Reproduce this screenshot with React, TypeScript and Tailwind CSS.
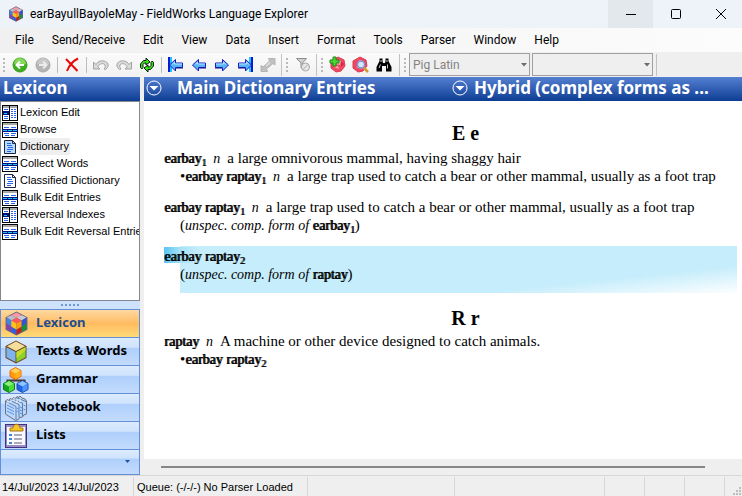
import type { ReactNode } from 'react';

const uiFont = 'font-[Roboto,sans-serif]';
const listFont = "font-['Liberation_Sans',Arial,sans-serif]";
const boldFont = "font-['Noto_Sans','Open_Sans',sans-serif]";
const bookFont = "font-['Liberation_Serif',serif]";

function Cubes({ size }: { size: number }) {
  return (
    <svg width={size} height={size} viewBox="0 0 24 24" aria-hidden="true">
      <path d="M12 .5 22.500 6v12L12 23.500 1.500 18V6z" fill="#6a6480" />
      <path d="M12 1.500 17 4l-5 2.500L7 4z" fill="#ff9aa0" />
      <path d="M7 4l5 2.500L7 9 2.500 6z" fill="#b9bccb" />
      <path d="M17 4l4.500 2L17 9l-5-2.500z" fill="#c8cad4" />
      <path d="M12 6.500 17 9l-5 3-5-3z" fill="#ff5a5a" />
      <path d="M2.500 6.500 7 9v6l-4.500-3z" fill="#3f86e8" />
      <path d="M7 9l5 3v6l-5-3z" fill="#ffc21a" />
      <path d="M12 12l5-3v6l-5 3z" fill="#ff9c10" />
      <path d="M17 9l4.500-2.500V12L17 15z" fill="#2e55d4" />
      <path d="M2.500 12 7 15v5l-4.500-2.500z" fill="#8c3fae" />
      <path d="M7 15l5 3v4.500L7 20z" fill="#2f62d9" />
      <path d="M12 18l5-3v5l-5 2.500z" fill="#c3201f" />
      <path d="M17 15l4.500-3v5.500L17 20z" fill="#159338" />
    </svg>
  );
}

function WordsIcon() {
  return (
    <svg width="24" height="26" viewBox="0 0 24 26" aria-hidden="true">
      <path d="M12 1.500 22.500 7v12L12 24.500 1.500 19V7z" fill="#6d4a28" />
      <path d="M12 2.500 21 7.200 12 12 3 7.200z" fill="#f7dd9a" />
      <path d="M2.500 8.200 11.500 13v10L2.500 18.300z" fill="#7db4ee" />
      <path d="M12.500 13l9-4.800v10.100l-9 4.900z" fill="#8bd32a" />
      <path d="M12.500 13l9-4.800v3l-9 8z" fill="#c6dc2b" />
    </svg>
  );
}

function GrammarIcon() {
  const hex = (x: number, y: number, top: string, left: string, right: string, edge: string) => (
    <g transform={`translate(${x} ${y})`}>
      <path d="M0-6 5.500-3v6L0 6-5.500 3v-6z" fill={left} stroke={edge} strokeLinejoin="round" />
      <path d="M0-5.500 5-2.800 0 0-5-2.800z" fill={top} />
      <path d="M0 0l5-2.800v5.600L0 5.500z" fill={right} />
    </g>
  );
  return (
    <svg width="26" height="26" viewBox="0 0 26 26" aria-hidden="true">
      <path d="M12.500 11v3M4.500 16v-2.500h17V16" fill="none" stroke="#4c3428" strokeWidth="2" />
      {hex(12.5, 6.5, '#ffd35a', '#ff9a10', '#ffb01c', '#f06a00')}
      {hex(6, 19.5, '#86f07a', '#14a51e', '#4fdc3a', '#0c7d18')}
      {hex(19.5, 19.5, '#90c4ff', '#1e62e0', '#4c96ff', '#1848b0')}
    </svg>
  );
}

function NotebookIcon() {
  return (
    <svg width="24" height="26" viewBox="0 0 24 26" aria-hidden="true">
      <path d="M1.500 6 3 4.500l2 1 1-2 2 1 1.500-2 2 1 1.500-2 2 1 1-1.500L18 3l3 1 1.500 2v13l-3 1-1 2-3 .5-1 2-3 1L1.500 19z" fill="#bcd8fb" stroke="#6c6f80" />
      <path d="M2 6.500l10 5V25M5 5l10 4.500v13M8.500 4l10 4v13M12 2.500l10 4" fill="none" stroke="#5f7ea9" />
      <path d="M3 10l7 3.500M3 13l7 3.500M3 16l7 3.500M16 12l2 1M16 15l2 1M16 18l2 1M13 13l1.500 1M13 16l1.500 1M19.500 10l2 1M19.500 14l2 1" stroke="#4f90ee" />
      <path d="M4 5.500v3M7 4.500v3M10 3v3M13 5v3M16 4v3" stroke="#f4f8ff" />
    </svg>
  );
}

function ListsIcon() {
  return (
    <svg width="24" height="26" viewBox="0 0 24 26" aria-hidden="true">
      <rect x="1.500" y="1.500" width="21" height="23" fill="#9a8cc8" stroke="#41307e" />
      <rect x="3" y="4" width="18" height="18" fill="#fbfbff" />
      <path d="M6 8V5h3c0-5 7-5 7 0h3v3z" fill="#f5c52c" stroke="#a3720c" />
      <path d="M5 11h3v2H5zM5 15h3v2H5zM5 19h3v2H5z" fill="#3d86dc" />
      <path d="M10 12h8M10 16h8M10 20h8" stroke="#8f92a8" strokeWidth="1.500" />
    </svg>
  );
}

function ColumnsIcon() {
  return (
    <svg width="16" height="16" viewBox="0 0 16 16" shapeRendering="crispEdges" aria-hidden="true">
      <path d="M0 0h16v16H0z" fill="#000" />
      <path d="M1 1h6v2H1zM8 1h7v2H8z" fill="#a9a9a9" />
      <path d="M1 3h6v12H1zM8 3h7v12H8z" fill="#fff" />
      <path d="M2 4h4v1H2zM2 11h4v1H2zM2 13h4v1H2zM9 4h2v1H9zM12 4h2v1h-2zM9 6h2v1H9zM12 6h2v1h-2zM9 8h2v1H9zM12 8h2v1h-2zM9 10h2v1H9zM12 10h2v1h-2zM9 12h2v1H9zM12 12h2v1h-2z" fill="#2a62f0" />
      <path d="M1 6h6v4H1z" fill="#00107c" />
      <path d="M2 8h3v1H2z" fill="#16c8f0" />
    </svg>
  );
}

function RowsIcon() {
  return (
    <svg width="16" height="16" viewBox="0 0 16 16" shapeRendering="crispEdges" aria-hidden="true">
      <path d="M0 0h16v16H0z" fill="#000" />
      <path d="M1 1h14v2H1z" fill="#a9a9a9" />
      <path d="M1 3h14v4H1zM1 10h14v5H1z" fill="#fff" />
      <path d="M2 5h5v1H2zM9 5h5v1H9zM2 11h5v1H2zM9 11h5v1H9zM3 13h4v1H3zM9 13h4v1H9z" fill="#2a62f0" />
      <path d="M0 7h16v3H0z" fill="#00107c" />
      <path d="M1 8h4v1H1zM6 8h4v1H6zM11 8h4v1h-4z" fill="#16c8f0" />
    </svg>
  );
}

function PageIcon({ shade }: { shade: string }) {
  return (
    <svg width="16" height="16" viewBox="0 0 16 16" aria-hidden="true">
      <path d="M2.500 1.500h8l3 3v10h-11z" fill={shade} stroke="#1c2440" />
      <path d="M10.500 1.500v3h3" fill="none" stroke="#1c2440" />
      <path d="M5 4.500h4M5 6.500h5M6 8.500h5M5 10.500h6M5 12.500h4" stroke="#2a62f0" />
    </svg>
  );
}

function Arrow({ left, bar }: { left?: boolean; bar?: boolean }) {
  return (
    <svg width="16" height="16" viewBox="0 0 16 16" aria-hidden="true">
      <g transform={left ? undefined : 'translate(16 0) scale(-1 1)'}>
        {bar && <path d="M0 0h2v15H0z" fill="#0a18d8" />}
        {bar && <path d="M2 0h2v15H2z" fill="#18c8f8" />}
        <path d="M1.500 8l6-5.500V6h7v4.500h-7V14z" fill="#58b4f8" stroke="#1a1cc0" strokeLinejoin="round" />
        <path d="M4 7.500 6.500 5.200V7H14" fill="none" stroke="#b4e4ff" />
        <path d="M8 11H15" stroke="#10108c" />
      </g>
    </svg>
  );
}

function RoundArrow({ forward }: { forward?: boolean }) {
  return (
    <svg width="16" height="16" viewBox="0 0 16 16" aria-hidden="true">
      <circle cx="8" cy="8" r="7" fill={forward ? '#b4b4b4' : '#3fae1c'} stroke={forward ? '#a8a8a8' : '#3c9c22'} />
      <path d="M2 7a6 6 0 0 1 12 0c-3 2-8-1-12 0z" fill={forward ? '#c8c8c8' : '#86d857'} />
      <path
        d={forward ? 'M4 8h7M8 4.500 11.500 8 8 11.500' : 'M12 8H5M8 4.500 4.500 8 8 11.500'}
        fill="none"
        stroke={forward ? '#ececec' : '#fff'}
        strokeWidth="2"
      />
    </svg>
  );
}

function DeleteIcon() {
  return (
    <svg width="16" height="16" viewBox="0 0 16 16" aria-hidden="true">
      <path d="M2 2l11.500 12M14 1.500C9 4 5 9 3 14" fill="none" stroke="#e80808" strokeWidth="2" />
    </svg>
  );
}

function Curve({ flip }: { flip?: boolean }) {
  return (
    <svg width="16" height="16" viewBox="0 0 16 16" aria-hidden="true">
      <g transform={flip ? 'translate(16 0) scale(-1 1)' : undefined}>
        <path d="M.5 5v7H7L4.800 9.800C6.500 6.500 10.500 5.500 12 8c.7 1.500 0 3-1 4l1.500.5c3.500-2.500 3.500-6.500 0-8C9 3 5 4 3 7.500z" fill="#dadada" stroke="#a2a2a2" />
      </g>
    </svg>
  );
}

function RefreshIcon() {
  return (
    <svg width="16" height="16" viewBox="0 0 16 16" aria-hidden="true">
      <g fill="#38e01c" stroke="#041c04" strokeLinejoin="round">
        <path d="M1.500 10.500V7L4.500 3.500H7V1l4 4-4 3V6H5.500L4 7.500v3L2.800 12z" />
        <path d="M14.500 5.500V9L11.500 12.500H9V15l-4-4 4-3v2h1.500L12 8.500v-3L13.200 4z" />
      </g>
    </svg>
  );
}

function LinkIcon() {
  return (
    <svg width="16" height="16" viewBox="0 0 16 16" aria-hidden="true">
      <path d="M8.500 1.500h6.500v6.500L13 6.500 6.500 12 7.500 14.500H1V8.500L3 10l6.500-6z" fill="#c0c0c0" stroke="#b4b4b4" />
      <path d="M6 9l4-3.500" stroke="#d8d8d8" strokeWidth="2" />
    </svg>
  );
}

function FilterIcon() {
  return (
    <svg width="16" height="16" viewBox="0 0 16 16" aria-hidden="true">
      <path d="M1.500 1.500h10L7.500 6v6L6 10.500V6z" fill="#cfcfcf" stroke="#8f8f8f" />
      <circle cx="10.500" cy="10" r="4" fill="#e8e8e8" stroke="#a6a6a6" />
      <path d="M8 12.500 13 7.500" stroke="#a6a6a6" />
    </svg>
  );
}

function Gem() {
  return (
    <>
      <path d="M9 1l6 3 1 6-4 5-5 1-5-4V5z" fill="#f04860" stroke="#d83c54" />
      <path d="M8 4l4 1-1 4-5-1zM5 11l4-1 1 3z" fill="#ffa4b2" />
      <path d="M12 5l3 3-3 3z" fill="#d02848" />
    </>
  );
}

function AddEntryIcon() {
  return (
    <svg width="17" height="17" viewBox="0 0 17 17" aria-hidden="true">
      <Gem />
      <path d="M4 1h3v3h3v3H7v3H4V7H1V4h3z" fill="#48d830" stroke="#1a8c1a" />
    </svg>
  );
}

function FindEntryIcon() {
  return (
    <svg width="17" height="17" viewBox="0 0 17 17" aria-hidden="true">
      <g transform="translate(-1 0)"><Gem /></g>
      <path d="M11.500 11.500 16 16" stroke="#d8982c" strokeWidth="2.500" />
      <circle cx="9" cy="8.500" r="3.500" fill="#d0eafe" stroke="#7c98d8" strokeWidth="1.500" />
    </svg>
  );
}

function BinocularsIcon() {
  return (
    <svg width="16" height="16" viewBox="0 0 16 16" aria-hidden="true">
      <path d="M3.500 1.500h3V4L7 6h2l.5-2V1.500h3V4L15.500 10v4.500H10V9H6v5.500H.5V10l3-6z" fill="#000" />
      <path d="M5 3v2M11 3v2M4.500 7.500 3 11M11.500 7.500v4" stroke="#fff" strokeWidth=".8" />
    </svg>
  );
}

function Grip() {
  return (
    <span className="flex w-2 shrink-0 flex-col items-center gap-[2px]" aria-hidden="true">
      <i className="size-[2px] bg-[#b9b9b9]" />
      <i className="size-[2px] bg-[#b9b9b9]" />
      <i className="size-[2px] bg-[#b9b9b9]" />
      <i className="size-[2px] bg-[#b9b9b9]" />
    </span>
  );
}

function Divider() {
  return <span className="mr-[2px] ml-[3px] h-4 w-px shrink-0 bg-[#bdbdbd]" aria-hidden="true" />;
}

function GroupEnd() {
  return <span className="mx-px h-[22px] w-px shrink-0 bg-[#c2c2c2]" aria-hidden="true" />;
}

function Tool({ label, children }: { label: string; children: ReactNode }) {
  return (
    <button type="button" aria-label={label} className="flex h-6 w-[23px] shrink-0 items-center justify-center">
      {children}
    </button>
  );
}

function Combo({ label, value }: { label: string; value: string }) {
  return (
    <span className="relative mr-[2px] block w-[121px] shrink-0">
      <select
        aria-label={label}
        defaultValue={value}
        className="block h-[23px] w-full appearance-none border border-[#a0a0a0] bg-[#efefef] px-[3px] text-[12px] leading-4 text-[#838383]"
      >
        <option>{value}</option>
      </select>
      <svg className="pointer-events-none absolute top-[10px] right-[3px]" width="6" height="4" viewBox="0 0 6 4" aria-hidden="true">
        <path d="M0 0h6L3 3.500z" fill="#6d6d6d" />
      </svg>
    </span>
  );
}

const menus = ['File', 'Send/Receive', 'Edit', 'View', 'Data', 'Insert', 'Format', 'Tools', 'Parser', 'Window', 'Help'];

const views = [
  { name: 'Lexicon Edit', icon: <ColumnsIcon /> },
  { name: 'Browse', icon: <RowsIcon /> },
  { name: 'Dictionary', icon: <PageIcon shade="#b5dcf8" />, current: true },
  { name: 'Collect Words', icon: <RowsIcon /> },
  { name: 'Classified Dictionary', icon: <PageIcon shade="#ffffff" /> },
  { name: 'Bulk Edit Entries', icon: <RowsIcon /> },
  { name: 'Reversal Indexes', icon: <ColumnsIcon /> },
  { name: 'Bulk Edit Reversal Entries', icon: <RowsIcon /> },
];

const areas = [
  { name: 'Lexicon', icon: <Cubes size={25} />, current: true },
  { name: 'Texts & Words', icon: <WordsIcon /> },
  { name: 'Grammar', icon: <GrammarIcon /> },
  { name: 'Notebook', icon: <NotebookIcon /> },
  { name: 'Lists', icon: <ListsIcon /> },
];

function DropCircle() {
  return (
    <svg width="16" height="16" viewBox="0 0 16 16" className="shrink-0" aria-hidden="true">
      <circle cx="8" cy="8" r="7" fill="none" stroke="#fff" />
      <path d="M3.500 6h9L8 10.500z" fill="#fff" />
    </svg>
  );
}

function Word({ children, n }: { children: string; n?: number }) {
  return (
    <b className="text-[14px] leading-none font-normal [text-shadow:1px_0_currentColor]">
      {children}
      {n && <span className="relative top-[3px] text-[10px] leading-none">{n}</span>}
    </b>
  );
}

function Sense({ children }: { children: string }) {
  return (
    <>
      <i className="mx-[7px] text-[14px] leading-none">n</i>
      {children}
    </>
  );
}

function FormOf({ children, n }: { children: string; n?: number }) {
  return (
    <p className="pl-4">
      (<i className="text-[14px] leading-none">unspec. comp. form of </i>
      <Word n={n}>{children}</Word>)
    </p>
  );
}

const trap = 'a large trap used to catch a bear or other mammal, usually as a foot trap';
const barFill = 'bg-linear-to-b from-[#5580d2] to-[#0b3d93]';

export default function App() {
  return (
    <div className={`flex h-screen flex-col overflow-hidden bg-[#efefef] text-[12px] text-black ${uiFont}`}>
      <header className="flex h-7 shrink-0 items-center bg-[#eef3f9] pl-2">
        <Cubes size={16} />
        <h1 className="ml-[6px] grow text-[12px]">earBayullBayoleMay - FieldWorks Language Explorer</h1>
        <button type="button" aria-label="Minimize" className="flex h-7 w-[45px] items-center justify-center bg-[#e3e8ed]">
          <svg width="10" height="10" viewBox="0 0 10 10"><path d="M0 5.500h10" stroke="#000" /></svg>
        </button>
        <button type="button" aria-label="Maximize" className="flex h-7 w-[46px] items-center justify-center">
          <svg width="10" height="10" viewBox="0 0 10 10"><rect x=".5" y=".5" width="9" height="9" rx="1" fill="none" stroke="#000" /></svg>
        </button>
        <button type="button" aria-label="Close" className="flex h-7 w-[43px] items-center justify-center">
          <svg width="10" height="10" viewBox="0 0 10 10"><path d="M0 0l10 10M10 0 0 10" stroke="#000" /></svg>
        </button>
      </header>

      <nav aria-label="Menu bar" className="flex h-6 shrink-0 items-center gap-[18px] bg-linear-to-r from-[#f0f0f0] to-[#fcfcfc] pl-[15px]">
        {menus.map((m) => (
          <button key={m} type="button">{m}</button>
        ))}
      </nav>

      <div role="toolbar" aria-label="Main toolbar" className="flex h-[25px] shrink-0 items-center">
        <div className="flex items-center bg-linear-to-b from-[#fbfbfb] to-[#f1f1f1]">
          <Grip />
          <Tool label="Back"><RoundArrow /></Tool>
          <Tool label="Forward"><RoundArrow forward /></Tool>
          <Divider />
          <Tool label="Delete"><DeleteIcon /></Tool>
          <Divider />
          <Tool label="Undo"><Curve /></Tool>
          <Tool label="Redo"><Curve flip /></Tool>
          <Tool label="Refresh"><RefreshIcon /></Tool>
          <Divider />
          <Tool label="First"><Arrow left bar /></Tool>
          <Tool label="Previous"><Arrow left /></Tool>
          <Tool label="Next"><Arrow /></Tool>
          <Tool label="Last"><Arrow bar /></Tool>
          <Tool label="Link"><LinkIcon /></Tool>
          <span className="w-px" />
          <GroupEnd />
          <Grip />
          <Tool label="Clear filter"><FilterIcon /></Tool>
          <span className="w-px" />
          <GroupEnd />
          <Grip />
          <Tool label="Add entry"><AddEntryIcon /></Tool>
          <Tool label="Find entry"><FindEntryIcon /></Tool>
          <Tool label="Find"><BinocularsIcon /></Tool>
          <span className="w-[3px]" />
          <GroupEnd />
          <Grip />
        </div>
        <Combo label="Writing system" value="Pig Latin" />
        <Combo label="Style" value="" />
        <GroupEnd />
      </div>

      <div className="flex min-h-0 grow gap-1">
        <aside className="flex w-[140px] shrink-0 flex-col">
          <h2 className={`h-6 shrink-0 pl-[3px] text-[17px] leading-[22px] font-bold text-white ${boldFont} ${barFill}`}>Lexicon</h2>
          <ul className={`min-h-0 grow overflow-hidden border border-[#828790] bg-white pt-[2px] pl-px text-[11px] ${listFont}`}>
            {views.map((v) => (
              <li key={v.name}>
                <button type="button" className="flex h-[17px] w-full items-center gap-px text-left whitespace-nowrap">
                  <span className="shrink-0">{v.icon}</span>
                  <span className={v.current ? 'bg-[#efefef] px-px leading-[17px]' : 'px-px leading-[17px]'}>{v.name}</span>
                </button>
              </li>
            ))}
          </ul>
          <div className="flex h-2 shrink-0 items-center justify-center gap-[2px] bg-[#cfe2fc]" aria-hidden="true">
            {[0, 1, 2, 3, 4].map((d) => (
              <i key={d} className="size-[2px] bg-[#6f97d6]" />
            ))}
          </div>
          <div className="shrink-0 border border-t-0 border-[#6390d4]">
            {areas.map((a) => (
              <button
                key={a.name}
                type="button"
                className={`flex h-7 w-full items-center border-t border-[#6390d4] pl-[2px] text-[13px] font-bold ${boldFont} ${
                  a.current
                    ? 'bg-linear-to-b from-[#ffd9a0] via-[#ffbb60] to-[#ffdb78] text-[#204d8e]'
                    : 'bg-[linear-gradient(#dcebfe_0%,#cfe3fd_35%,#aecffb_36%,#c3dbfd_100%)]'
                }`}
              >
                <span className="flex w-[26px] shrink-0 justify-center">{a.icon}</span>
                <span className="ml-[7px] pb-[2px] whitespace-nowrap">{a.name}</span>
              </button>
            ))}
            <div className="flex h-[25px] items-center justify-end border-t border-[#6390d4] bg-[linear-gradient(#dcebfe_0%,#cfe3fd_35%,#aecffb_36%,#c3dbfd_100%)] pr-[9px]">
              <button type="button" aria-label="Configure buttons">
                <svg width="5" height="4" viewBox="0 0 5 4"><path d="M0 0h5L2.500 3z" fill="#24509a" /></svg>
              </button>
            </div>
          </div>
        </aside>

        <main className="flex min-w-0 grow flex-col">
          <div className={`flex h-6 shrink-0 items-center pb-[2px] text-[17px] leading-[22px] font-bold text-white ${boldFont} ${barFill}`}>
            <button type="button" className="flex grow items-center gap-[15px] pl-[2px] whitespace-nowrap">
              <DropCircle />
              Main Dictionary Entries
            </button>
            <button type="button" className="flex w-[290px] shrink-0 items-center gap-[6px] whitespace-nowrap">
              <DropCircle />
              Hybrid (complex forms as ...
            </button>
          </div>

          <article className={`min-h-0 grow overflow-hidden bg-white pt-5 pr-[5px] pl-5 text-[15px] leading-[18px] whitespace-nowrap ${bookFont}`}>
            <h3 className="mb-1 pl-[30px] text-center text-[20px] leading-6 font-bold">E e</h3>
            <div className="mb-[13px]">
              <p><Word n={1}>earbay</Word><Sense>a large omnivorous mammal, having shaggy hair</Sense></p>
              <p className="pl-4"><b className="font-normal">•</b><Word n={1}>earbay raptay</Word><Sense>{trap}</Sense></p>
            </div>
            <div className="mb-[12px]">
              <p><Word n={1}>earbay raptay</Word><Sense>{trap}</Sense></p>
              <FormOf n={1}>earbay</FormOf>
            </div>
            <div className="mb-[13px] pt-px pb-[10px] [background:linear-gradient(90deg,#58c4f1,#a6e1f8)_0_1px/16px_16px_no-repeat,linear-gradient(90deg,#a6e1f8,transparent)_16px_1px/20px_16px_no-repeat,linear-gradient(174deg,#c6edfb_73%,#fff_100%)_16px_0/100%_100%_no-repeat]">
              <p><Word n={2}>earbay raptay</Word></p>
              <FormOf>raptay</FormOf>
            </div>
            <h3 className="mb-[2px] pl-[30px] text-center text-[20px] leading-6 font-bold">R r</h3>
            <div>
              <p><Word>raptay</Word><Sense>A machine or other device designed to catch animals.</Sense></p>
              <p className="pl-4"><b className="font-normal">•</b><Word n={2}>earbay raptay</Word></p>
            </div>
          </article>

          <div className="flex h-4 shrink-0 items-center pr-[37px] pl-[17px]">
            <div className="h-[2px] grow bg-[#868686]" />
          </div>
        </main>
      </div>

      <footer className={`flex h-[21px] shrink-0 items-stretch border-t border-[#d7d7d7] pt-px text-[11px] leading-5 whitespace-nowrap ${listFont}`}>
        <span className="w-[134px] shrink-0 border-r border-[#d7d7d7] pl-[2px]">14/Jul/2023 14/Jul/2023</span>
        <span className="w-[174px] shrink-0 border-r border-[#d7d7d7] pl-[3px]">Queue: (-/-/-) No Parser Loaded</span>
        <span className="w-[147px] shrink-0 border-r border-[#d7d7d7]" />
        <span className="grow border-r border-[#d7d7d7]" />
        <span className="w-10 border-r border-[#d7d7d7]" />
        <span className="w-10 border-r border-[#d7d7d7]" />
        <span className="w-10 border-r border-[#d7d7d7]" />
        <span className="flex w-[17px] items-end justify-end">
          <svg width="10" height="10" viewBox="0 0 10 10" aria-hidden="true">
            <path d="M7 1h2v2H7zM7 4h2v2H7zM4 4h2v2H4zM7 7h2v2H7zM4 7h2v2H4zM1 7h2v2H1z" fill="#bdbdbd" />
          </svg>
        </span>
      </footer>
    </div>
  );
}
